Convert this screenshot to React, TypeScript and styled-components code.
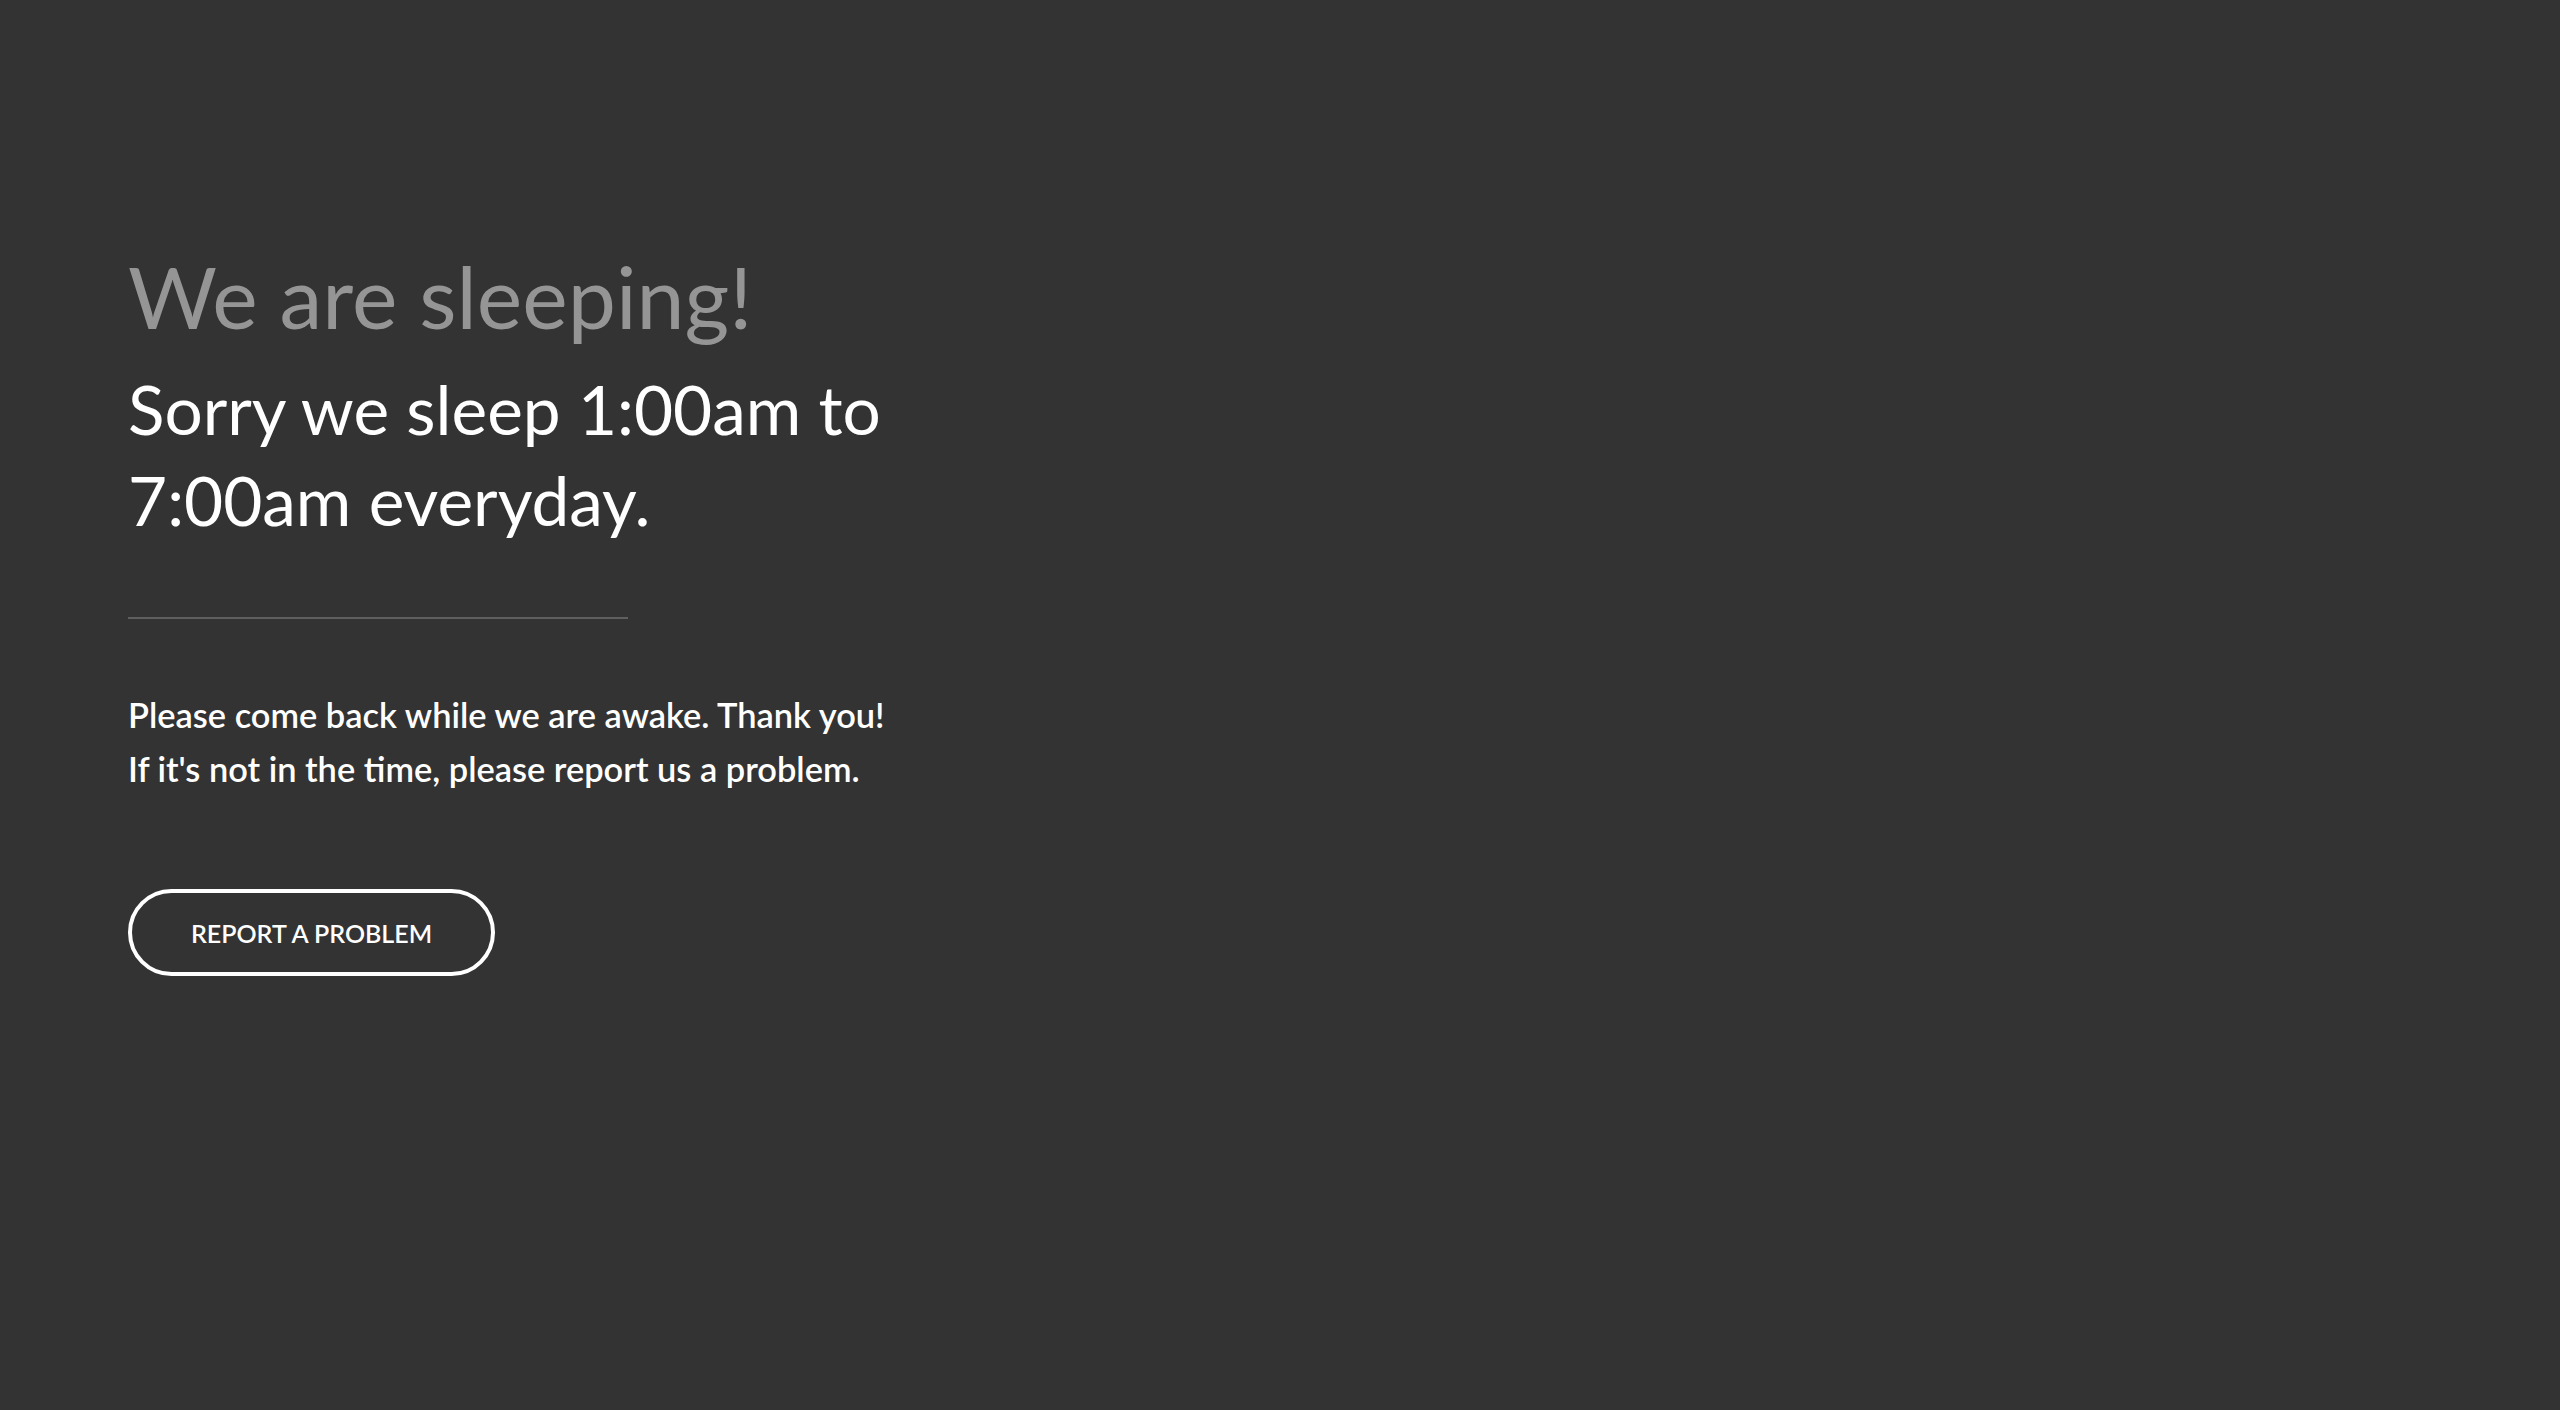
import styled, { createGlobalStyle } from "styled-components";

const GlobalStyle = createGlobalStyle`
  html, body {
    margin: 0;
    padding: 0;
    background: #333333;
  }
  body {
    font-family: Lato, "Open Sans", sans-serif;
    color: #ffffff;
  }
`;

export default function App() {
  return (
    <>
      <GlobalStyle />
      <Page>
        <Content>
          <Title>We are sleeping!</Title>
          <Subtitle>
            Sorry we sleep 1:00am to
            <br />
            7:00am everyday.
          </Subtitle>
          <Divider />
          <Message>
            Please come back while we are awake. Thank you!
            <br />
            If it's not in the time, please report us a problem.
          </Message>
          <ReportButton type="button">REPORT A PROBLEM</ReportButton>
        </Content>
      </Page>
    </>
  );
}

const Page = styled.main`
  min-height: 1410px;
  box-sizing: border-box;
  padding: 244px 128px 0;
`;

const Content = styled.section`
  display: flex;
  flex-direction: column;
  align-items: flex-start;
  width: 900px;
`;

const Title = styled.h1`
  margin: 0;
  font-size: 86px;
  font-weight: 400;
  line-height: 1.2;
  color: #959595;
`;

const Subtitle = styled.h2`
  margin: 16px 0 0;
  font-size: 67.5px;
  font-weight: 400;
  line-height: 91px;
  color: #ffffff;
`;

const Divider = styled.hr`
  width: 500px;
  height: 2px;
  margin: 72px 0 0;
  border: 0;
  background: #5f5f5f;
`;

const Message = styled.p`
  margin: 69px 0 0;
  font-size: 34.4px;
  font-weight: 600;
  line-height: 54px;
`;

const ReportButton = styled.button`
  margin-top: 93px;
  width: 367px;
  height: 87px;
  border: 4px solid #ffffff;
  border-radius: 44px;
  background: transparent;
  color: #ffffff;
  font-family: Lato, "Open Sans", sans-serif;
  font-size: 25px;
  font-weight: 600;
  cursor: pointer;
`;
